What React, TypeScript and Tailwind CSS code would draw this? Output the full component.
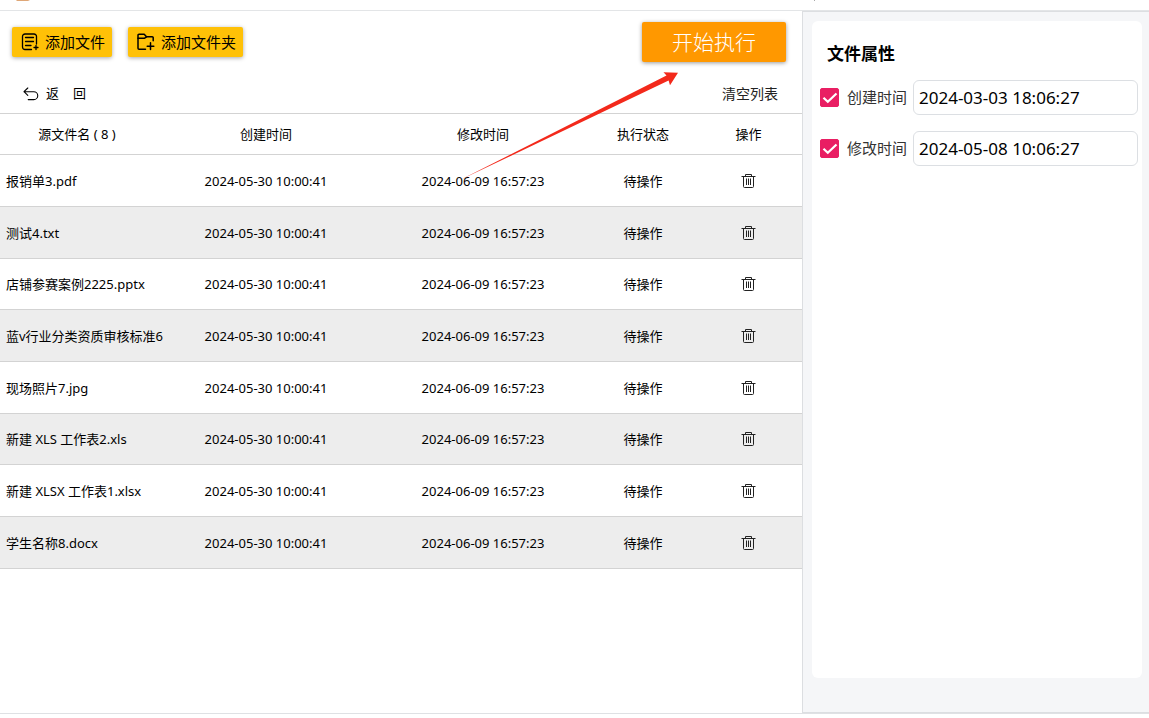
import { useState } from "react";

const CREATED = "2024-05-30 10:00:41";
const MODIFIED = "2024-06-09 16:57:23";

const initialFiles = [
  "报销单3.pdf",
  "测试4.txt",
  "店铺参赛案例2225.pptx",
  "蓝v行业分类资质审核标准6",
  "现场照片7.jpg",
  "新建 XLS 工作表2.xls",
  "新建 XLSX 工作表1.xlsx",
  "学生名称8.docx",
];

function AddFileIcon() {
  return (
    <svg width="18" height="18" viewBox="0 0 18 18" fill="none" stroke="currentColor" strokeWidth="1.3" strokeLinecap="round" aria-hidden="true">
      <path d="M10.5 16.500H4a2.500 2.500 0 0 1-2.500-2.500V3.500A2.500 2.500 0 0 1 4 1h9a2.500 2.500 0 0 1 2.500 2.500V11" />
      <path d="M4.500 4.500h8M4.500 8.500h8M4.500 12.500h5.500M15 12.500v4M13 14.500h4" />
    </svg>
  );
}

function AddFolderIcon() {
  return (
    <svg width="18" height="18" viewBox="0 0 18 18" fill="none" stroke="currentColor" strokeWidth="1.5" strokeLinecap="round" strokeLinejoin="round" aria-hidden="true">
      <path d="M8.500 16.200H2a1 1 0 0 1-1-1V2.200a1 1 0 0 1 1-1h5.200l2.300 2.600h5.700a1 1 0 0 1 1 1v3" />
      <path d="M1 5.300h6.300l2.200-1.500M13.500 9.800v6.800M10.200 13.200h6.600" />
    </svg>
  );
}

function BackIcon() {
  return (
    <svg width="16" height="14" viewBox="0 0 16 14" fill="none" stroke="currentColor" strokeWidth="1.1" strokeLinecap="round" strokeLinejoin="round" aria-hidden="true">
      <path d="M4.800 1 1 4.700l3.800 3.700M1 4.700h9.800a3.950 3.950 0 0 1 0 7.900H5.200" />
    </svg>
  );
}

function TrashIcon() {
  return (
    <svg width="15" height="16" viewBox="0 0 15 16" fill="none" stroke="currentColor" strokeWidth="1" strokeLinejoin="round" aria-hidden="true">
      <path d="M0.500 3.500h14M4.500 3.500v-2h6v2M2.500 3.500v10a1 1 0 0 0 1 1h8a1 1 0 0 0 1-1v-10M5.500 5.500v6.500M7.500 5.500v6.500M9.500 5.500v6.500" />
    </svg>
  );
}

function PointerArrow() {
  return (
    <svg className="pointer-events-none absolute left-[460px] top-[70px]" width="220" height="112" viewBox="460 70 220 112" aria-hidden="true">
      <path fill="#f3291b" d="M460 180 L666.500 75.600 L663.500 72.200 L678 72.700 L670 85.200 L668.600 80.600 Z" />
    </svg>
  );
}

function DateField({ id, label, value }: { id: string; label: string; value: string }) {
  const [checked, setChecked] = useState(true);
  const [text, setText] = useState(value);
  return (
    <div className="flex items-center">
      <span className="grid w-[19px] shrink-0 place-items-center">
        <input
          id={id + "-on"}
          type="checkbox"
          checked={checked}
          onChange={(e) => setChecked(e.target.checked)}
          className="col-start-1 row-start-1 size-[19px] appearance-none rounded-xs border border-[#e91e63] bg-white checked:bg-[#e91e63]"
        />
        {checked && (
          <svg className="pointer-events-none col-start-1 row-start-1" width="16" height="16" viewBox="0 0 16 16" fill="none" stroke="#fff" strokeWidth="2.2" aria-hidden="true">
            <path d="m1.500 7.800 4.300 4L14.500 3.500" />
          </svg>
        )}
      </span>
      <label htmlFor={id + "-on"} className="ml-2 w-[66px] shrink-0 text-[15px] text-[#333]">
        {label}
      </label>
      <input
        type="text"
        aria-label={label}
        value={text}
        onChange={(e) => setText(e.target.value)}
        className="h-[35px] w-full min-w-0 rounded-md border border-[#dcdfe3] bg-white px-[5px] text-[17px] text-black"
      />
    </div>
  );
}

export default function App() {
  const [files, setFiles] = useState(initialFiles);

  return (
    <div className="relative flex min-h-screen flex-col bg-white pb-1 font-['Noto_Sans','Noto_Sans_CJK_SC',sans-serif] text-[13px] text-black">
      <header className="flex h-[11px] shrink-0 items-start border-b border-[#e3e5e7] pl-4">
        <svg width="14" height="2" viewBox="0 0 14 2" aria-hidden="true">
          <path fill="#dfa777" d="M0 0h14l-2 1H1z" />
        </svg>
        <svg className="ml-[783px]" width="3" height="2" viewBox="0 0 3 2" aria-hidden="true">
          <path fill="#aaa" d="M1 0h1v1H1z" />
        </svg>
      </header>

      <div className="flex flex-1 border-b border-[#dfe1e4]">
        <main className="min-w-0 flex-1">
          <div className="flex items-start pl-3 pr-4 pt-[11px]">
            <button className="mt-[5px] flex h-[30px] items-center gap-[6px] rounded-xs bg-[#ffc107] pl-[9px] pr-[7px] text-[15px] leading-5 shadow-[0_1px_4px_rgba(0,0,0,0.35)]">
              <AddFileIcon />
              添加文件
            </button>
            <button className="ml-4 mt-[5px] flex h-[30px] items-center gap-[6px] rounded-xs bg-[#ffc107] pl-[9px] pr-[7px] text-[15px] leading-5 shadow-[0_1px_4px_rgba(0,0,0,0.35)]">
              <AddFolderIcon />
              添加文件夹
            </button>
            <button className="ml-auto h-10 w-36 rounded-xs bg-[#ff9800] text-[21px] font-light leading-10 text-white shadow-[0_1px_4px_rgba(0,0,0,0.4)]">
              开始执行
            </button>
          </div>

          <div className="mt-3 flex h-10 items-center justify-between border-b border-[#d3d3d3] pl-[23px] pr-6">
            <button className="flex items-center gap-[7px]">
              <BackIcon />
              <span className="flex gap-[14px]">
                <span>返</span>
                <span>回</span>
              </span>
            </button>
            <button className="text-sm text-[#222]" onClick={() => setFiles([])}>
              清空列表
            </button>
          </div>

          <table className="w-full table-fixed border-collapse text-center">
            <colgroup>
              <col className="w-[154px]" />
              <col className="w-[224px]" />
              <col className="w-[210px]" />
              <col className="w-[110px]" />
              <col className="w-[104px]" />
            </colgroup>
            <thead>
              <tr className="h-10 border-b border-[#d3d3d3]">
                <th className="pt-[2px] font-normal">源文件名 ( {files.length} )</th>
                <th className="pt-[2px] font-normal">创建时间</th>
                <th className="pt-[2px] font-normal">修改时间</th>
                <th className="pt-[2px] font-normal">执行状态</th>
                <th className="pr-[3px] pt-[2px] font-normal">操作</th>
              </tr>
            </thead>
            <tbody>
              {files.map((name) => (
                <tr key={name} className="h-[52px] border-b border-[#d3d3d3] even:bg-[#ededed] nth-[3n]:h-[51px]">
                  <td className="whitespace-nowrap pl-[6px] pt-[3px] text-left">{name}</td>
                  <td className="pt-[3px]">{CREATED}</td>
                  <td className="pt-[3px]">{MODIFIED}</td>
                  <td className="pt-[3px]">待操作</td>
                  <td className="pr-[3px]">
                    <button
                      aria-label={"删除 " + name}
                      className="align-middle text-[#222]"
                      onClick={() => setFiles(files.filter((f) => f !== name))}
                    >
                      <TrashIcon />
                    </button>
                  </td>
                </tr>
              ))}
            </tbody>
          </table>
        </main>

        <aside className="flex w-[347px] shrink-0 flex-col border-y border-l border-[#dcdee1] bg-[#f5f6f8] pb-[34px] pl-[9px] pr-[7px] pt-[9px]">
          <section className="flex-1 rounded-md bg-white pl-2 pr-1 pt-[21px]">
            <h2 className="pl-[7px] text-[17px] font-bold leading-6">文件属性</h2>
            <div className="mt-[14px] flex flex-col gap-4">
              <DateField id="created" label="创建时间" value="2024-03-03 18:06:27" />
              <DateField id="modified" label="修改时间" value="2024-05-08 10:06:27" />
            </div>
          </section>
        </aside>
      </div>
      <PointerArrow />
    </div>
  );
}
